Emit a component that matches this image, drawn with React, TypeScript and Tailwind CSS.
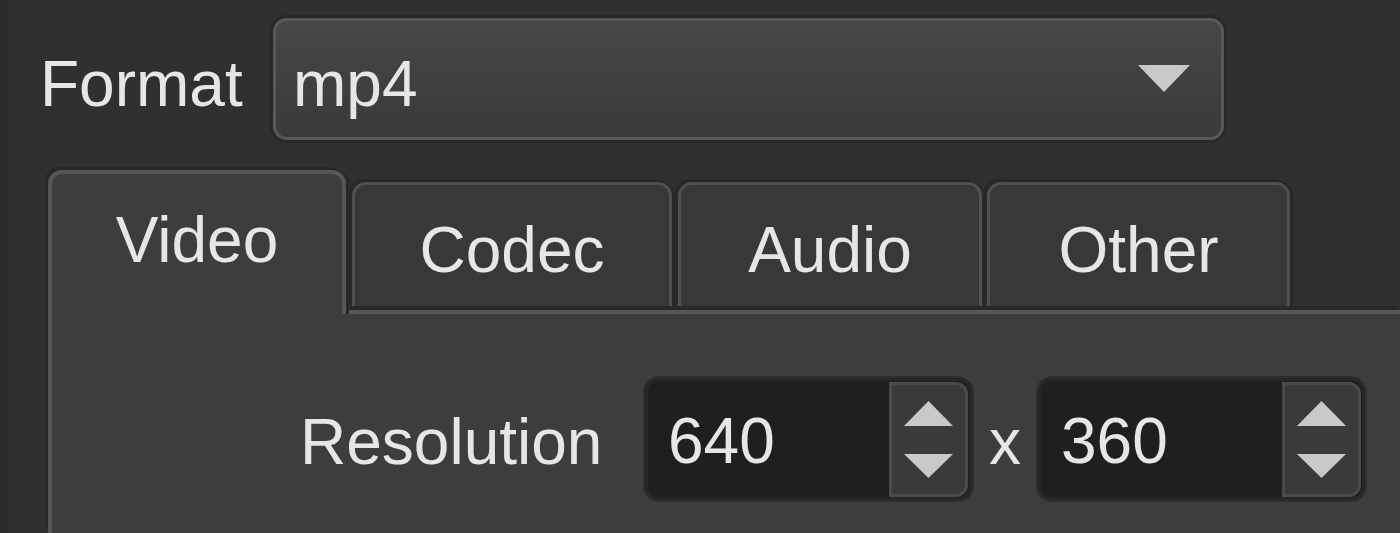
import React from "react";

function Tri({ up, w, h }: { up?: boolean; w: number; h: number }) {
  return (
    <svg width={w} height={h} viewBox={`0 0 ${w} ${h}`} className="block">
      {up ? (
        <polygon points={`${w / 2},0 ${w},${h} 0,${h}`} fill="#c9c9c9" />
      ) : (
        <polygon points={`0,0 ${w},0 ${w / 2},${h}`} fill="#c9c9c9" />
      )}
    </svg>
  );
}

function Spin({ value }: { value: string }) {
  return (
    <div className="w-[327px] h-[122px] rounded-[14px] bg-[#1f1f1f] border-[3px] border-[#262626] flex items-center shadow-[0_0_0_2px_#2e2e2e]">
      <div className="flex-1 pl-[20px] leading-none pt-[4px]">{value}</div>
      <div className="w-[79px] h-[115px] mr-[1px] rounded-r-[12px] bg-[#3a3a3a] border-[3px] border-[#4a4a4a] flex flex-col items-center justify-center gap-[28px]">
        <Tri up w={49} h={25} />
        <Tri w={49} h={24} />
      </div>
    </div>
  );
}

function Tab({ label }: { label: string }) {
  return (
    <div className="h-[124px] mt-[12px] rounded-t-[14px] border-[3px] border-b-0 border-[#505050] bg-[#383838] shadow-[-3px_-3px_0_#282828,3px_0_0_#282828] flex items-center justify-center pt-[8px] leading-none">
      {label}
    </div>
  );
}

export default function App() {
  return (
    <div className="w-[1400px] h-[533px] overflow-hidden bg-[#303030] flex font-['Liberation_Sans',Arial,sans-serif] text-[64px] text-[#e6e6e6]">
      <div className="w-[8px] shrink-0 bg-[#2a2a2a]" />
      <div className="flex-1 flex flex-col">
        <div className="mt-[18px] flex items-center h-[122px] pl-[32px]">
          <div className="w-[233px] leading-none pt-[10px]">Format</div>
          <div className="w-[951px] h-[122px] rounded-[14px] border-[3px] border-[#585858] bg-gradient-to-b from-[#474747] to-[#3a3a3a] shadow-[0_0_0_3px_#282828] flex items-center">
            <div className="flex-1 pl-[17px] leading-none pt-[10px]">mp4</div>
            <div className="mr-[31px] mb-[2px]">
              <Tri w={52} h={27} />
            </div>
          </div>
        </div>
        <div className="mt-[30px] ml-[40px] flex flex-col flex-1">
          <div className="flex items-start gap-[6px] h-[140px]">
            <div className="relative z-10 w-[298px] h-[144px] rounded-t-[14px] border-[4px] border-b-0 border-[#565656] bg-[#3d3d3d] shadow-[-3px_-3px_0_#282828,3px_0_0_#282828] flex items-center justify-center pb-[8px] leading-none">
              Video
            </div>
            <div className="w-[320px]">
              <Tab label="Codec" />
            </div>
            <div className="w-[304px]">
              <Tab label="Audio" />
            </div>
            <div className="w-[303px] -ml-[1px]">
              <Tab label="Other" />
            </div>
          </div>
          <div className="flex-1 border-t-[4px] border-l-[4px] border-[#565656] bg-[#3d3d3d] shadow-[-3px_-4px_0_#282828]">
            <div className="mt-[64px] flex items-center h-[122px] pl-[248px]">
              <div className="w-[345px] leading-none pt-[6px]">Resolution</div>
              <Spin value="640" />
              <div className="w-[66px] text-center leading-none pt-[6px]">x</div>
              <Spin value="360" />
            </div>
          </div>
        </div>
      </div>
    </div>
  );
}
